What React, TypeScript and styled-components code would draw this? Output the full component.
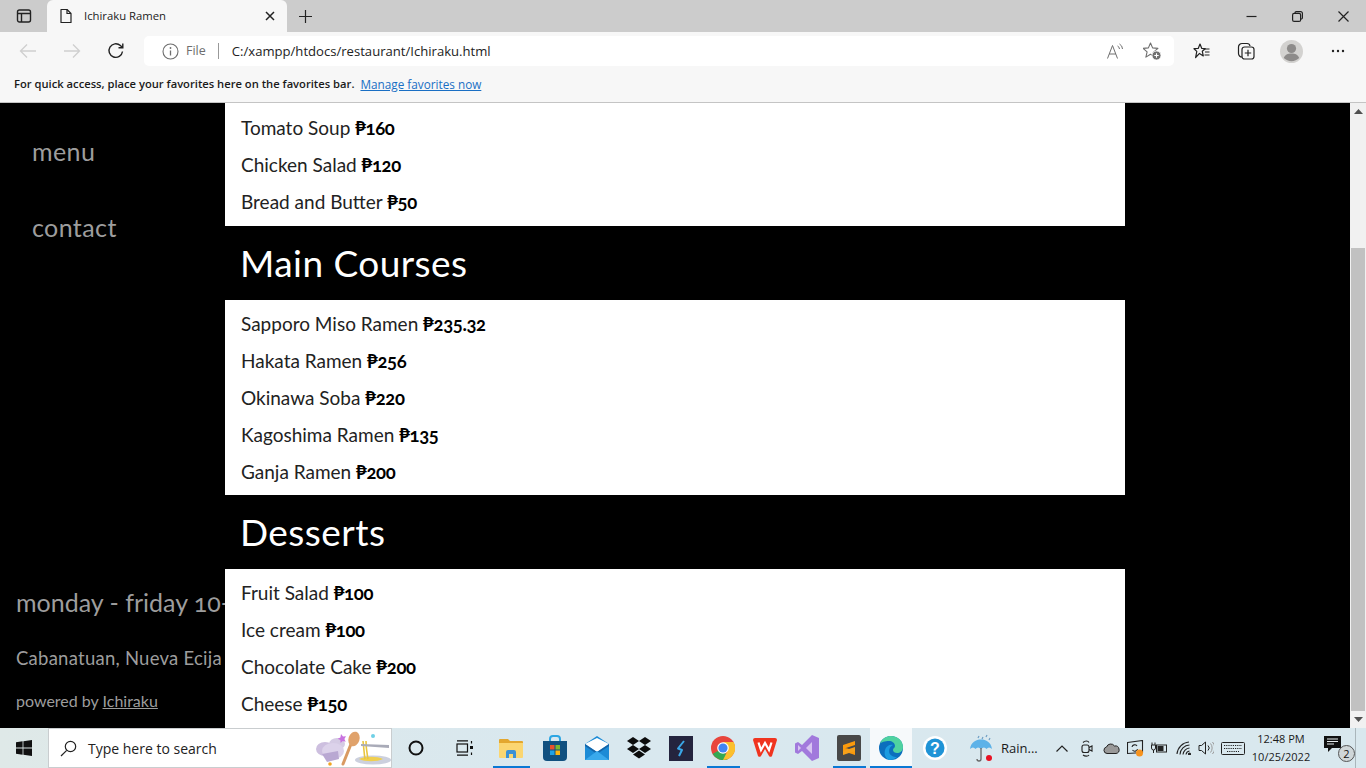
import React from 'react';
import styled, { createGlobalStyle } from 'styled-components';

const Global = createGlobalStyle`
  html, body { margin: 0; padding: 0; height: 100%; overflow: hidden; background: #000; }
  * { box-sizing: border-box; }
  #root { height: 100%; }
`;
const ui = `"Open Sans", "Noto Sans", sans-serif`;
const page = `"Lato", "Open Sans", sans-serif`;

const Shell = styled.div`display: flex; flex-direction: column; width: 1366px; height: 768px; overflow: hidden;`;
const TitleBar = styled.div`display: flex; align-items: stretch; height: 32px; background: #ccc; flex: none;`;
const TabToggle = styled.div`width: 47px; display: flex; align-items: center; justify-content: center;`;
const Tab = styled.div`
  width: 240px; background: #f7f7f7; border-radius: 6px 6px 0 0; display: flex; align-items: center;
  padding: 0 12px 1px 12px; font: 400 11.3px ${ui}; color: #222;
`;
const TabTitle = styled.span`margin-left: 11px; flex: 1;`;
const NewTab = styled.div`width: 36px; display: flex; align-items: center; justify-content: center;`;
const Spacer = styled.div`flex: 1;`;
const WinBtn = styled.div`width: 46px; display: flex; align-items: center; justify-content: center;`;

const ToolBar = styled.div`height: 38px; background: #f7f7f7; display: flex; align-items: center; flex: none; padding-left: 6px;`;
const NavBtn = styled.div`width: 44px; display: flex; align-items: center; justify-content: center;`;
const Address = styled.div`
  width: 1030px; height: 30px; margin-left: 6px; background: #fff; border-radius: 5px; display: flex; align-items: center;
  padding: 0 4px 0 18px; font: 400 12.5px ${ui}; color: #222;
`;
const FileLabel = styled.span`color: #6e6e6e; margin-left: 7px; padding-right: 12px; border-right: 1px solid #999; line-height: 16px;`;
const Url = styled.span`margin-left: 13px; flex: 1; font-size: 13.1px;`;
const AddrIcon = styled.div`width: 37px; display: flex; justify-content: center;`;
const ToolRight = styled.div`display: flex; flex: 1; padding-left: 4px;`;
const ToolBtn = styled.div`
  width: 47px; display: flex; justify-content: center; align-items: center; margin-right: -1px;
  &:first-child { margin-right: -3px; }
`;

const FavBar = styled.div`
  height: 33px; background: #f7f7f7; border-bottom: 1px solid #c4c4c4; flex: none; display: flex; align-items: center;
  padding: 0 0 5px 14px; font: 600 11.2px ${ui}; color: #1a1a1a; gap: 6px;
`;
const FavLink = styled.a`color: #1a6fc4; text-decoration: underline; font-weight: 400; font-size: 11.75px;`;

const Viewport = styled.div`flex: 1; display: flex; min-height: 0; background: #000; overflow: hidden;`;
const Sidebar = styled.aside`
  width: 225px; flex: none; overflow: hidden; white-space: nowrap; color: #9d9d9d; font-family: ${page};
  display: flex; flex-direction: column; justify-content: space-between; padding: 29px 0 16px;
`;
const NavList = styled.nav`display: flex; flex-direction: column; gap: 38px; padding-left: 32px;`;
const NavItem = styled.a`font-size: 25px; line-height: 38px; letter-spacing: 0.4px;`;
const Foot = styled.div`display: flex; flex-direction: column; padding-left: 16px;`;
const Hours = styled.div`font-size: 25px; line-height: 32px; font-variant-numeric: oldstyle-nums; width: 209px; overflow: hidden;`;
const Place = styled.div`font-size: 18.5px; line-height: 26px; margin-top: 27px; letter-spacing: .25px;`;
const Power = styled.div`font-size: 16px; line-height: 22px; margin-top: 19px;`;
const PowerLink = styled.a`text-decoration: underline;`;

const Content = styled.main`width: 900px; flex: none; overflow: hidden; font-family: ${page};`;
const List = styled.ul<{ $top?: number; $bottom?: number }>`
  list-style: none; margin: 0; background: #fff; color: #222;
  padding: ${p => p.$top ?? 5}px 16px ${p => p.$bottom ?? 5}px;
`;
const Item = styled.li`height: 37px; line-height: 37px; font-size: 19px; white-space: nowrap;`;
const Price = styled.b`font-weight: 700; color: #000; font-size: 18.5px; letter-spacing: -.35px; font-variant-numeric: oldstyle-nums;`;
const Heading = styled.h2`
  margin: 0; height: 74px; line-height: 73px; padding-left: 15px; color: #fff; font-weight: 400; font-size: 37px; letter-spacing: .45px;
`;
const Gutter = styled.div`flex: 1;`;
const ScrollBar = styled.div`width: 16px; flex: none; background: #f1f1f1; display: flex; flex-direction: column; align-items: center;`;
const Arrow = styled.div`height: 17px; flex: none; display: flex; align-items: center; justify-content: center;`;
const Thumb = styled.div`width: 14px; height: 463px; background: #c1c1c1; margin-top: 128px;`;

const Taskbar = styled.footer`
  height: 40px; flex: none; display: flex; align-items: stretch;
  background: linear-gradient(90deg, #dfe9e8 0%, #d9e8ef 40%, #d9e8ee 100%); font-family: ${ui}; color: #1a1a1a;
`;
const Start = styled.div`width: 48px; display: flex; align-items: center; justify-content: center;`;
const Search = styled.div`
  width: 344px; background: #fff; border: 1px solid #c9cdcf; display: flex; align-items: center; padding-left: 11px; font-size: 14px; color: #222; position: relative;
`;
const SearchText = styled.span`margin-left: 11px; flex: 1;`;
const Slot = styled.div<{ $w?: number; $on?: boolean; $hi?: boolean }>`
  width: ${p => p.$w ?? 42}px; flex: none; display: flex; align-items: center; justify-content: center; position: relative;
  background: ${p => (p.$hi ? 'rgba(255,255,255,.75)' : 'transparent')};
  ${p => p.$on ? `&::after { content: ''; position: absolute; bottom: 0; left: ${p.$hi ? 0 : 5}px; right: ${p.$hi ? 0 : 4}px; height: 2px; background: #0a78d4; }` : ''}
`;
const Weather = styled.div`width: 91px; flex: none; display: flex; align-items: center; gap: 6px; padding-left: 11px; font-size: 13px;`;
const Clock = styled.div`width: 72px; flex: none; text-align: center; font-size: 11px; line-height: 18px; padding-top: 2px; padding-right: 10px; white-space: nowrap;`;
const Desk = styled.div`flex: 1; border-left: 1px solid #aab6bb;`;
const Badge = styled.span`
  position: absolute; left: 16px; top: 17px; width: 17px; height: 17px; border-radius: 50%; background: #cfd6d8; border: 1px solid #555;
  font-size: 11px; line-height: 15px; text-align: center; color: #111;
`;

const S = { fill: 'none', stroke: '#222', strokeWidth: 1.2 } as const;

export default function App() {
  return (
    <Shell>
      <Global />
      <TitleBar>
        <TabToggle>
          <svg width="16" height="16" viewBox="0 0 16 16" {...S} strokeWidth={1.4}><rect x="1.5" y="2" width="13" height="12" rx="2" /><path d="M1.500 5.500h13M5.500 5.500V14" /></svg>
        </TabToggle>
        <Tab>
          <svg width="14" height="16" viewBox="0 0 14 16" {...S}><path d="M2 1.500h6l4 4v9H2z" strokeLinejoin="round" /><path d="M8 1.500v4h4" /></svg>
          <TabTitle>Ichiraku Ramen</TabTitle>
          <svg width="10" height="10" viewBox="0 0 10 10" {...S} strokeWidth={1.5}><path d="M1 1l8 8M9 1l-8 8" /></svg>
        </Tab>
        <NewTab>
          <svg width="15" height="15" viewBox="0 0 15 15" {...S}><path d="M7.500 1v13M1 7.500h13" /></svg>
        </NewTab>
        <Spacer />
        <WinBtn><svg width="11" height="11" viewBox="0 0 11 11" {...S}><path d="M.5 5.500h10" /></svg></WinBtn>
        <WinBtn><svg width="11" height="11" viewBox="0 0 11 11" {...S}><rect x=".6" y="2.400" width="8" height="8" rx="1.500" /><path d="M3 2.400V1.900A1.300 1.300 0 0 1 4.300.6h4.400a1.700 1.700 0 0 1 1.700 1.700v4.400A1.300 1.300 0 0 1 9 8" /></svg></WinBtn>
        <WinBtn><svg width="11" height="11" viewBox="0 0 11 11" {...S}><path d="M.5.5l10 10M10.500.5l-10 10" /></svg></WinBtn>
      </TitleBar>
      <ToolBar>
        <NavBtn><svg width="18" height="16" viewBox="0 0 18 16" fill="none" stroke="#cfcfcf" strokeWidth="1.300"><path d="M17 8H1.500M8 1.500L1.500 8 8 14.500" /></svg></NavBtn>
        <NavBtn><svg width="18" height="16" viewBox="0 0 18 16" fill="none" stroke="#cfcfcf" strokeWidth="1.300"><path d="M1 8h15.500M10 1.500L16.500 8 10 14.500" /></svg></NavBtn>
        <NavBtn><svg width="18" height="18" viewBox="0 0 18 18" {...S} strokeWidth={1.4}><path d="M15.500 9.500A6.800 6.800 0 1 1 13.400 3.600L15.800 5.800M15.800 1.500v4.300h-4.300" /></svg></NavBtn>
        <Address>
          <svg width="17" height="17" viewBox="0 0 17 17" fill="none" stroke="#6e6e6e" strokeWidth="1.100"><circle cx="8.500" cy="8.500" r="7.500" /><path d="M8.500 7.500v5" strokeWidth="1.300" /><circle cx="8.500" cy="5" r=".9" fill="#6e6e6e" stroke="none" /></svg>
          <FileLabel>File</FileLabel>
          <Url>C:/xampp/htdocs/restaurant/Ichiraku.html</Url>
          <AddrIcon>
            <svg width="16" height="16" viewBox="0 0 16 16" fill="none" stroke="#6e6e6e" strokeWidth="1"><path d="M.5 15.500L5.500 2.500l5 13M2.200 11h6.600" /><path d="M10.500 3a3.500 3.500 0 0 1 2 3M12.500 1a6 6 0 0 1 3 5" /></svg>
          </AddrIcon>
          <AddrIcon>
            <svg width="18" height="18" viewBox="0 0 18 18" fill="none" stroke="#6e6e6e" strokeWidth="1.100"><path d="M7.500 1l2.100 4.900 5.300.5-4 3.500 1.200 5.200-4.600-2.800-4.600 2.800 1.200-5.200-4-3.500 5.300-.5z" strokeLinejoin="round" /><circle cx="13.500" cy="13.500" r="4.500" fill="#6e6e6e" stroke="#fff" strokeWidth=".8" /><path d="M13.500 11.300v4.400M11.300 13.500h4.400" stroke="#fff" /></svg>
          </AddrIcon>
        </Address>
        <ToolRight>
          <ToolBtn>
            <svg width="18" height="18" viewBox="0 0 18 18" {...S}><path d="M7 2l1.800 4.400 3.400.3-2.900 2.600 1 4.600L6.500 11.400 2.600 15.500 3.800 9.400 1 6.700l4.200-.3z" strokeLinejoin="round" /><path d="M11.500 7h5M12 10h4.500M11.500 13h5" /></svg>
          </ToolBtn>
          <ToolBtn>
            <svg width="18" height="18" viewBox="0 0 18 18" {...S}><path d="M5 15A3.500 3.500 0 0 1 1.500 11.500V5A3.500 3.500 0 0 1 5 1.500h5A3 3 0 0 1 13 4" /><rect x="5" y="5" width="12" height="12" rx="2.500" fill="#f7f7f7" /><path d="M11 7.800v6.400M7.800 11h6.400" /></svg>
          </ToolBtn>
          <ToolBtn>
            <svg width="23" height="23" viewBox="0 0 23 23"><circle cx="11.500" cy="11.500" r="11.500" fill="#d3d2d0" /><circle cx="11.500" cy="8.500" r="4.600" fill="#8d8b8a" /><path d="M3.800 18c1-3.400 4-4.600 7.700-4.600s6.700 1.200 7.700 4.600a11 11 0 0 1-15.400 0z" fill="#8d8b8a" /></svg>
          </ToolBtn>
          <ToolBtn>
            <svg width="14" height="4" viewBox="0 0 14 4" fill="#222"><circle cx="2" cy="2" r="1.200" /><circle cx="7" cy="2" r="1.200" /><circle cx="12" cy="2" r="1.200" /></svg>
          </ToolBtn>
        </ToolRight>
      </ToolBar>
      <FavBar>
        <span>For quick access, place your favorites here on the favorites bar.</span>
        <FavLink>Manage favorites now</FavLink>
      </FavBar>
      <Viewport>
        <Sidebar>
          <NavList>
            <NavItem>menu</NavItem>
            <NavItem>contact</NavItem>
          </NavList>
          <Foot>
            <Hours>monday - friday 10-8pm</Hours>
            <Place>Cabanatuan, Nueva Ecija</Place>
            <Power>powered by <PowerLink>Ichiraku</PowerLink></Power>
          </Foot>
        </Sidebar>
        <Content>
          <List $top={6} $bottom={6}>
            <Item>Tomato Soup <Price>₱160</Price></Item>
            <Item>Chicken Salad <Price>₱120</Price></Item>
            <Item>Bread and Butter <Price>₱50</Price></Item>
          </List>
          <Heading>Main Courses</Heading>
          <List>
            <Item>Sapporo Miso Ramen <Price>₱235.32</Price></Item>
            <Item>Hakata Ramen <Price>₱256</Price></Item>
            <Item>Okinawa Soba <Price>₱220</Price></Item>
            <Item>Kagoshima Ramen <Price>₱135</Price></Item>
            <Item>Ganja Ramen <Price>₱200</Price></Item>
          </List>
          <Heading>Desserts</Heading>
          <List $bottom={10}>
            <Item>Fruit Salad <Price>₱100</Price></Item>
            <Item>Ice cream <Price>₱100</Price></Item>
            <Item>Chocolate Cake <Price>₱200</Price></Item>
            <Item>Cheese <Price>₱150</Price></Item>
          </List>
        </Content>
        <Gutter />
        <ScrollBar>
          <Arrow><svg width="9" height="5" viewBox="0 0 9 5" fill="#505050"><path d="M4.500 0L9 5H0z" /></svg></Arrow>
          <Thumb />
          <Spacer />
          <Arrow><svg width="9" height="5" viewBox="0 0 9 5" fill="#505050"><path d="M4.500 5L9 0H0z" /></svg></Arrow>
        </ScrollBar>
      </Viewport>
      <Taskbar>
        <Start>
          <svg width="16" height="16" viewBox="0 0 16 16" fill="#111"><path d="M0 2.200L6.600 1.300v6.200H0zM7.400 1.200L16 0v7.500H7.400zM0 8.400h6.600v6.300L0 13.800zM7.400 8.400H16V16l-8.600-1.200z" /></svg>
        </Start>
        <Search>
          <svg width="17" height="17" viewBox="0 0 17 17" fill="none" stroke="#222" strokeWidth="1.200"><circle cx="10.500" cy="6.500" r="5.200" /><path d="M6.700 10.300L1 16" /></svg>
          <SearchText>Type here to search</SearchText>
          <svg width="78" height="38" viewBox="0 0 78 38">
            <ellipse cx="24" cy="15" rx="8" ry="6" fill="#d5cbe4" />
            <ellipse cx="12" cy="20" rx="9" ry="7" fill="#cdbfdf" />
            <ellipse cx="20" cy="22" rx="11" ry="8" fill="#dcd2ea" />
            <path d="M9 25l16-3 1 8-12 3z" fill="#b9a8d2" />
            <path d="M30 35L38 15" stroke="#d99a62" strokeWidth="3" strokeLinecap="round" />
            <ellipse cx="41" cy="10" rx="5.500" ry="7.500" transform="rotate(18 41 10)" fill="#e0a26b" />
            <path d="M28 5l2 2.600 3-.4-1.600 2.700 1.300 2.800-3-.6-2.100 2-.3-3-2.700-1.400 2.800-1.200z" fill="#c873df" />
            <ellipse cx="60" cy="31" rx="18" ry="4.500" fill="#ccd0de" />
            <path d="M46 30c6-3 18-3 24 0-6 3-18 3-24 0z" fill="#f0cf4e" />
            <path d="M50 12c1 8 1 12 2 18M53 12c0 8 1 12 2 18" stroke="#e9c53f" strokeWidth="1.600" fill="none" />
            <path d="M48 15l28 1 0 3-28-2z" fill="#a9abb8" />
            <circle cx="60" cy="7" r="2" fill="#6fd0e6" />
            <circle cx="17" cy="35" r="1.800" fill="#f2a51f" />
          </svg>
        </Search>
        <Slot $w={48}><svg width="16" height="16" viewBox="0 0 16 16" fill="none" stroke="#111" strokeWidth="2"><circle cx="8" cy="8" r="6.500" /></svg></Slot>
        <Slot $w={48}><svg width="17" height="16" viewBox="0 0 17 16" fill="none" stroke="#111" strokeWidth="1.200"><path d="M1 .8h11M1 15.200h11" /><rect x="1" y="4" width="10.500" height="8" /><path d="M15.500 1v2.500M15.500 12.500V15" /><rect x="14" y="6" width="3" height="3" fill="#111" stroke="none" /></svg></Slot>
        <Slot $w={46} $on>
          <svg width="24" height="20" viewBox="0 0 24 20"><path d="M0 2a1 1 0 0 1 1-1h8l2 2h12a1 1 0 0 1 1 1v3H0z" fill="#e3a72f" /><path d="M0 5h24v14a1 1 0 0 1-1 1H1a1 1 0 0 1-1-1z" fill="#fbd671" /><path d="M7 20v-6a2 2 0 0 1 2-2h6a2 2 0 0 1 2 2v6h-3v-4h-4v4z" fill="#3c91d6" /></svg>
        </Slot>
        <Slot>
          <svg width="24" height="26" viewBox="0 0 24 26"><path d="M7 7V4a3 3 0 0 1 3-3h4a3 3 0 0 1 3 3v3" fill="none" stroke="#2ca6e3" strokeWidth="2" /><path d="M0 6h24v16a4 4 0 0 1-4 4H4a4 4 0 0 1-4-4z" fill="#10507f" /><rect x="7" y="10" width="4.500" height="4.500" fill="#e8512c" /><rect x="12.500" y="10" width="4.500" height="4.500" fill="#7cb82f" /><rect x="7" y="15.500" width="4.500" height="4.500" fill="#1fa2e6" /><rect x="12.500" y="15.500" width="4.500" height="4.500" fill="#fbb612" /></svg>
        </Slot>
        <Slot>
          <svg width="24" height="24" viewBox="0 0 24 24"><path d="M0 8L12 0l12 8v16H0z" fill="#1c8bd6" /><path d="M0 8l12 8 12-8-12-6z" fill="#fff" /><path d="M0 8l12 8 12-8v2L12 18 0 10z" fill="#1565a8" /><path d="M0 24l12-9 12 9z" fill="#39a9ec" /></svg>
        </Slot>
        <Slot>
          <svg width="24" height="22" viewBox="0 0 24 22" fill="#0c0c0c"><path d="M6 0l6 4-6 4-6-4zM18 0l6 4-6 4-6-4zM6 8l6 4-6 4-6-4zM18 8l6 4-6 4-6-4zM12 13.500l6 4-6 4-6-4z" /></svg>
        </Slot>
        <Slot>
          <svg width="24" height="25" viewBox="0 0 24 25"><rect width="24" height="25" fill="#24243e" /><path d="M15 5l-6 7.500 4 1.500-3 6" fill="none" stroke="#3aa7e8" strokeWidth="2" strokeLinejoin="round" /></svg>
        </Slot>
        <Slot $on>
          <svg width="24" height="24" viewBox="0 0 24 24"><circle cx="12" cy="12" r="12" fill="#e8453c" /><path d="M12 12L1.600 18A12 12 0 0 0 17 23z" fill="#34a853" /><path d="M12 6h10.500A12 12 0 0 1 12 24l5-10z" fill="#fbc02d" /><circle cx="12" cy="12" r="5.800" fill="#fff" /><circle cx="12" cy="12" r="4.600" fill="#4285f4" /></svg>
        </Slot>
        <Slot>
          <svg width="24" height="20" viewBox="0 0 24 20"><path d="M0 2a2 2 0 0 1 2-2h20a2 2 0 0 1 2 2l-5 16a2 2 0 0 1-3 0l-4-7-4 7a2 2 0 0 1-3 0z" fill="#f0341f" /><path d="M5.500 4.500L8 12l4-7 4 7 2.500-7.500" fill="none" stroke="#fff" strokeWidth="2.200" /></svg>
        </Slot>
        <Slot>
          <svg width="24" height="26" viewBox="0 0 24 26"><path d="M17 0l7 3v20l-7 3-10-10-4 3-3-1.500v-9L3 7l4 3z" fill="#a179dc" /><path d="M17 7l-6 6 6 6z" fill="#d8c5f2" /><path d="M3 10v6l3-3z" fill="#d8c5f2" /></svg>
        </Slot>
        <Slot $on>
          <svg width="24" height="26" viewBox="0 0 24 26"><rect width="24" height="26" rx="2" fill="#484848" /><path d="M6 10l12-4v4L6 14zM6 12l12 4v4L6 16z" fill="#fb9a0c" /><path d="M6 16l12-4v4L6 20z" fill="#f7a11a" /></svg>
        </Slot>
        <Slot $on $hi>
          <svg width="24" height="24" viewBox="0 0 24 24"><circle cx="12" cy="12" r="12" fill="#0c6fbd" /><path d="M1 8C3 2 8 0 12 0c7 0 12 5 12 11 0 4-3 6-6 6-2 0-4-1-4-3 0-2 2-2 2-4 0-3-3-5-6-5C6 5 2 6 1 8z" fill="#4fd2a0" /><path d="M10 24C6 22 5 18 6 14c1-4 5-6 8-5-2 1-4 3-4 6 0 4 4 6 8 6-2 2-5 3-8 3z" fill="#1a9be0" /></svg>
        </Slot>
        <Slot $w={46}>
          <svg width="24" height="24" viewBox="0 0 24 24"><circle cx="12" cy="12" r="12" fill="#fff" /><circle cx="12" cy="12" r="9.500" fill="#1e93d6" /><text x="12" y="17.500" textAnchor="middle" fontSize="16" fontWeight="700" fill="#fff" fontFamily="Liberation Sans, sans-serif">?</text></svg>
        </Slot>
        <Weather>
          <svg width="26" height="30" viewBox="0 0 26 30"><path d="M1 16C2 9 7 6.500 12 6.500S22 9 23 16c-2-2-4-2-5.500 0-1.500-2-3.500-2-5.500 0-2-2-4-2-5.500 0C5 14 3 14 1 16z" fill="#5db2e8" /><path d="M12 15v11a2 2 0 0 1-4 0" fill="none" stroke="#666" strokeWidth="1.300" /><circle cx="20" cy="25" r="3" fill="#e81123" /><path d="M14 4l-1 2M18 2l-1 2M21 5l-1 2M10 3l-1 2" stroke="#6f9fc4" strokeWidth="1.200" /></svg>
          <span>Rain...</span>
        </Weather>
        <Slot $w={26}><svg width="12" height="7" viewBox="0 0 12 7" fill="none" stroke="#222" strokeWidth="1.200"><path d="M.5 6.500L6 1l5.500 5.500" /></svg></Slot>
        <Slot $w={24}><svg width="12" height="17" viewBox="0 0 12 17" fill="none" stroke="#222" strokeWidth="1.100"><rect x="1" y="5" width="7" height="7.500" rx="2" /><path d="M8 7.500l3-1.500v5L8 9.500M2 2.500c2-2 5-2 6 0M2 15c2 1.500 5 1.500 6 0" /></svg></Slot>
        <Slot $w={24}><svg width="17" height="11" viewBox="0 0 17 11"><path d="M4 10.500a3.300 3.300 0 0 1-.5-6.500A4.500 4.500 0 0 1 11.500 3 3.800 3.800 0 0 1 13 10.500z" fill="#999" stroke="#222" strokeWidth="1" /></svg></Slot>
        <Slot $w={24}><svg width="17" height="17" viewBox="0 0 17 17" fill="none" stroke="#222" strokeWidth="1.100"><path d="M.5 2.500l15-2v12l-15 1zM5 7a2.800 2.800 0 0 1 5-1M10.500 9a2.800 2.800 0 0 1-5 1" /><circle cx="12.500" cy="13" r="3.500" fill="#f7931e" stroke="none" /></svg></Slot>
        <Slot $w={24}><svg width="16" height="12" viewBox="0 0 16 12" fill="none" stroke="#222" strokeWidth="1"><rect x="5.500" y="3" width="10" height="7" /><rect x="7" y="4.500" width="5" height="4" fill="#222" /><path d="M1 3V.5M4 3V.5M.5 3h4v3a2 2 0 0 1-4 0zM2.500 8v3" /></svg></Slot>
        <Slot $w={25}><svg width="16" height="14" viewBox="0 0 16 14" fill="none" stroke="#222" strokeWidth="1.100"><path d="M1 13A13 13 0 0 1 13 1M4 13.500A10 10 0 0 1 13.500 4M7 13.500A7 7 0 0 1 13.500 7M10 13.500A4 4 0 0 1 13.500 10" /><circle cx="13.500" cy="13" r="1" fill="#222" /></svg></Slot>
        <Slot $w={20}><svg width="16" height="14" viewBox="0 0 16 14" fill="none" stroke="#222" strokeWidth="1"><path d="M1 4.500h2.500L7.500 1v12L3.500 9.500H1z" /><path d="M10 4.500a3.500 3.500 0 0 1 0 5" /><path d="M12.500 2.500a7 7 0 0 1 0 9M14.500 1a9 9 0 0 1 0 12" stroke="#999" /></svg></Slot>
        <Slot $w={34}><svg width="24" height="13" viewBox="0 0 24 13" fill="none" stroke="#222" strokeWidth="1"><rect x=".5" y=".5" width="23" height="12" rx="1" /><path d="M3 3.500h18M3 6.500h18M6 9.500h12" strokeDasharray="1.200 1" /></svg></Slot>
        <Clock>12:48 PM<br />10/25/2022</Clock>
        <Slot $w={33}>
          <svg width="17" height="16" viewBox="0 0 17 16" style={{ marginLeft: -12, marginTop: -8 }} fill="#111"><path d="M0 0h17v12H8l-4 4v-4H0z" /><path d="M3 3h11M3 5.500h11M3 8h7" stroke="#e8eef0" strokeWidth="1" /></svg>
          <Badge>2</Badge>
        </Slot>
        <Desk />
      </Taskbar>
    </Shell>
  );
}
